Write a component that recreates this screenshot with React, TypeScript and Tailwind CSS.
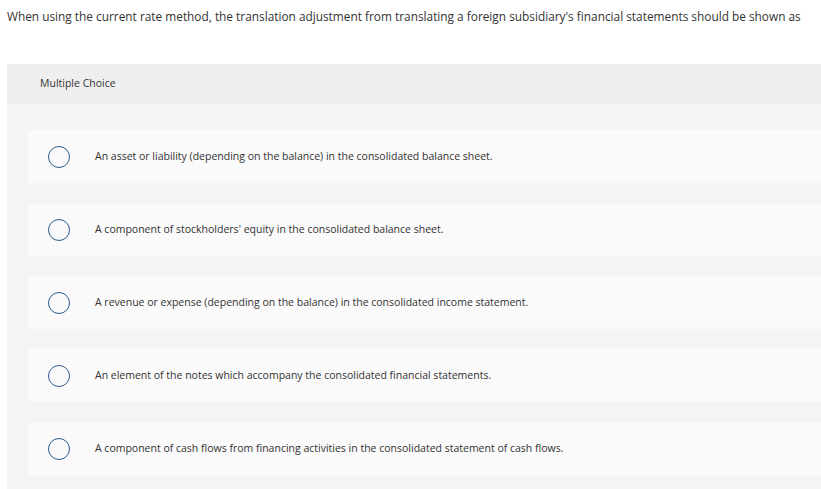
import React from 'react';

const options = [
  'An asset or liability (depending on the balance) in the consolidated balance sheet.',
  "A component of stockholders' equity in the consolidated balance sheet.",
  'A revenue or expense (depending on the balance) in the consolidated income statement.',
  'An element of the notes which accompany the consolidated financial statements.',
  'A component of cash flows from financing activities in the consolidated statement of cash flows.',
];

export default function App() {
  return (
    <div
      className="h-[489px] w-[821px] overflow-hidden bg-white text-[#333]"
      style={{ fontFamily: "'Open Sans', 'Liberation Sans', sans-serif" }}
    >
      {/* Question */}
      <p className="pl-[7px] pt-[8px] text-[11.85px] leading-[16px]">
        When using the current rate method, the translation adjustment from translating a foreign
        subsidiary's financial statements should be shown as
      </p>

      {/* Answer panel */}
      <div className="ml-[7px] mt-[40px] bg-[#f4f4f4]">
        <div className="flex h-[40px] items-center bg-[#efefef] pl-[33px] text-[10.5px]">
          Multiple Choice
        </div>
        <div className="flex flex-col gap-[20px] pl-[21px] pt-[26px] pb-[14px]">
          {options.map((o) => (
            <div key={o} className="flex h-[53px] items-center rounded-l-[3px] bg-[#fafafa]">
              <span className="ml-[20px] h-[22px] w-[22px] shrink-0 rounded-full border-[1.5px] border-[#2c5d8a]" />
              <span className="ml-[25px] text-[10.5px]">{o}</span>
            </div>
          ))}
        </div>
      </div>
    </div>
  );
}
